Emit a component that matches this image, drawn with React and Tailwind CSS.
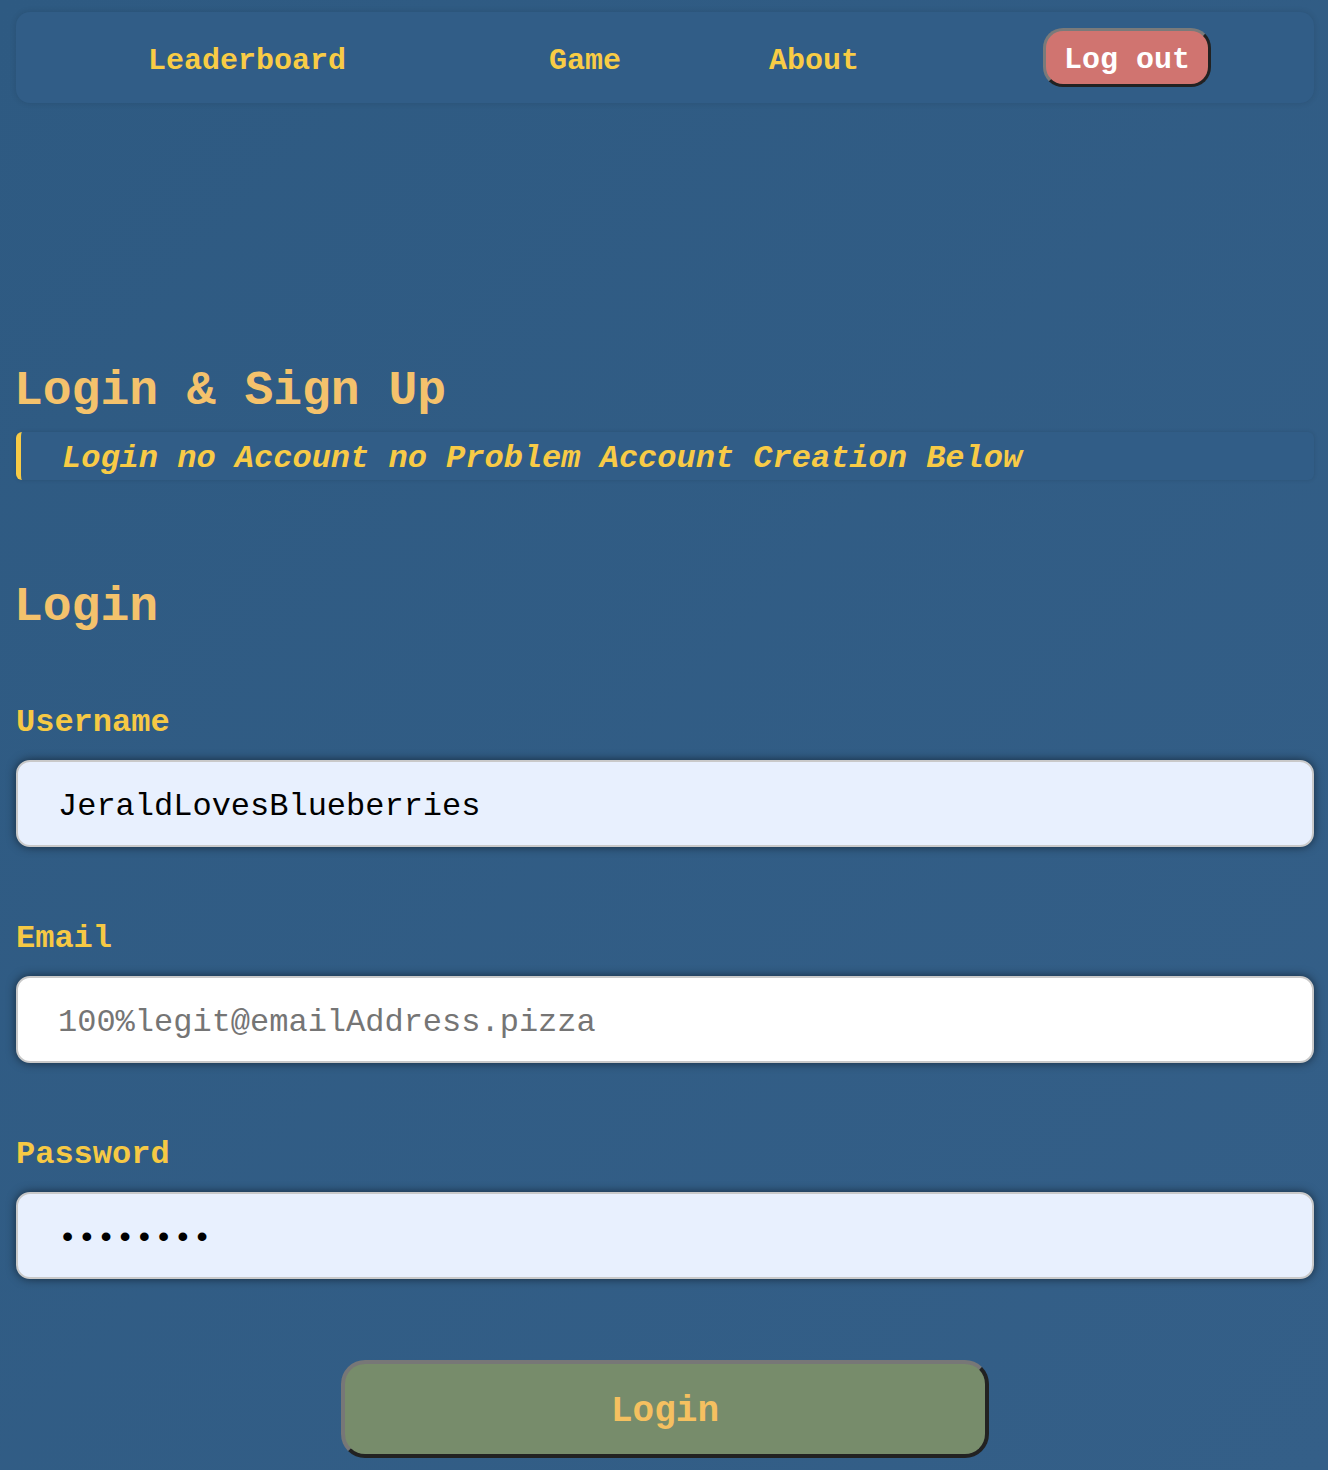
import React from 'react';

const mono = { fontFamily: '"Liberation Mono", "Courier New", monospace' };

const NavLink = ({ label, className = '' }) => (
  <a href="#" className={`block pt-[6px] text-[30px] leading-[36px] font-bold text-[#f8cc45] ${className}`}>
    {label}
  </a>
);

const Field = ({ label, type = 'text', value, placeholder, filled, top }) => (
  <div className={top}>
    <label className="block text-[32px] leading-[40px] font-bold text-[#f6c944]">{label}</label>
    <input
      type={type}
      readOnly
      value={value}
      placeholder={placeholder}
      className={`mt-[17px] block w-full h-[87px] rounded-[14px] border-2 border-[#c9c9c9] pl-[40px] pr-4 pt-[6px] text-[32px] text-black placeholder:text-[#757575] outline-none shadow-[0_0_10px_rgba(0,0,0,0.55)] ${filled ? 'bg-[#e8f0fe]' : 'bg-white'}`}
      style={mono}
    />
  </div>
);

export default function App() {
  return (
    <div
      className="min-h-[1470px] bg-gradient-to-br from-[#2e5a82] to-[#345f88] pl-4 pr-[14px] pt-3 pb-3"
      style={mono}
    >
      <nav className="flex items-center h-[91px] rounded-[14px] bg-[#315d87] shadow-[0_0_6px_rgba(0,0,0,0.12)] pl-[132px]">
        <NavLink label="Leaderboard" />
        <NavLink label="Game" className="ml-[203px]" />
        <NavLink label="About" className="ml-[148px]" />
        <button className="ml-[184px] h-[59px] px-[18px] pt-[5px] rounded-[20px] bg-[#d07470] border-[3px] border-t-[#7a7a7a] border-l-[#7a7a7a] border-r-[#222] border-b-[#222] text-[30px] leading-[36px] font-bold text-white">
          Log out
        </button>
      </nav>

      <h1 className="mt-[260px] -ml-[2px] text-[48px] leading-[56px] font-bold text-[#f4c26c]">
        Login &amp; Sign Up
      </h1>
      <div className="mt-[13px] flex items-center h-[48px] pt-[6px] rounded-[6px] border-l-[5px] border-[#f8cb46] bg-[#315d87] shadow-[0_0_4px_rgba(0,0,0,0.12)] pl-[41px]">
        <p className="text-[32px] leading-[40px] font-bold italic text-[#f8cb46]">
          Login no Account no Problem Account Creation Below
        </p>
      </div>

      <h2 className="mt-[99px] -ml-[2px] text-[48px] leading-[56px] font-bold text-[#f4c26c]">Login</h2>

      <form>
        <Field top="mt-[68px]" label="Username" value="JeraldLovesBlueberries" filled />
        <Field top="mt-[72px]" label="Email" placeholder="100%legit@emailAddress.pizza" />
        <Field top="mt-[72px]" label="Password" type="password" value="12345678" filled />

        <div className="mt-[81px] flex justify-center">
          <button
            type="button"
            className="w-[648px] h-[98px] pt-[6px] rounded-[24px] bg-[#778c6b] border-4 border-t-[#777] border-l-[#777] border-r-[#222] border-b-[#222] text-[36px] font-bold text-[#f5c060]"
          >
            Login
          </button>
        </div>
      </form>
    </div>
  );
}
